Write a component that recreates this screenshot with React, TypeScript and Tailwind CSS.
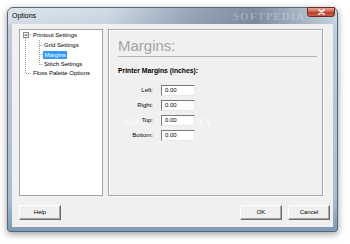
import React from "react";

const font = { fontFamily: '"Liberation Sans", Arial, sans-serif' };

function Btn({ label, className = "" }: { label: string; className?: string }) {
  return (
    <div
      className={
        "w-[42px] h-[15px] flex items-center justify-center text-[6px] text-black bg-[#f0f0f0] border border-t-white border-l-white border-r-[#6b6b6b] border-b-[#6b6b6b] shadow-[inset_-1px_-1px_0_#a8a8a8] " +
        className
      }
    >
      {label}
    </div>
  );
}

function Row({ label }: { label: string }) {
  return (
    <div className="flex items-center h-[11px]">
      <div className="w-[35px] text-right text-[6px] leading-[11px] text-black">{label}</div>
      <div className="ml-[8px] w-[34px] h-[11px] bg-white border-t border-l border-t-[#7a7a7a] border-l-[#7a7a7a] border-b border-r border-b-[#e8e8e8] border-r-[#e8e8e8] flex items-center pl-[3px] text-[6px] text-black">
        0.00
      </div>
    </div>
  );
}

export default function App() {
  return (
    <div className="w-[350px] h-[244px] bg-white pt-[7px] pl-[7px]" style={font}>
      <div className="relative w-[331px] h-[225px] flex flex-col rounded-t-[6px] rounded-b-[3px] border border-[#54667a] bg-[linear-gradient(to_bottom,#d3dde7,#bccbda_12%,#a9bdd0_85%,#7f9ab5)] shadow-[0_2px_7px_rgba(0,0,0,0.4)]">
        {/* Title bar */}
        <div className="relative h-[16px] flex items-center pl-[4px] rounded-t-[5px] bg-[linear-gradient(to_right,rgba(255,255,255,0.25),transparent_30%,rgba(70,90,115,0.4)_55%,rgba(60,80,105,0.55)_75%,rgba(90,110,130,0.3)_90%,transparent)]">
          <span className="text-[7px] text-black">Options</span>
          <span className="absolute left-[225px] top-[1px] text-[11px] leading-[14px] font-bold tracking-[1px] text-white/25" style={{ fontFamily: '"Liberation Serif", serif' }}>
            SOFTPEDIA
          </span>
          <div className="absolute right-[2px] top-[-1px] w-[28px] h-[10px] rounded-b-[3px] border border-[#6b2a22] bg-[linear-gradient(to_bottom,#e5a595,#cf6552_45%,#b7412f_55%,#c9604a)] flex items-center justify-center">
            <svg width="7" height="6" viewBox="0 0 7 6">
              <path d="M1 0.8 L6 5.2 M6 0.8 L1 5.2" stroke="#fff" strokeWidth="1.6" strokeLinecap="round" />
            </svg>
          </div>
        </div>

        {/* Client area */}
        <div className="mx-[4px] h-[203px] bg-[#f0f0f0] pt-[5px] pl-[7px] pr-[3px] flex flex-col relative">
          <div className="flex gap-[5px] h-[167px]">
            {/* Tree */}
            <div className="relative w-[84px] h-[167px] bg-white border border-[#a5a5a5] pt-[1px] text-[6px] text-black">
              <svg className="absolute left-0 top-0" width="84" height="60">
                <g stroke="#a0a0a0" strokeWidth="1" strokeDasharray="1 1" fill="none">
                  <path d="M5.5 8 V43.5 H12" />
                  <path d="M8 4.5 H12" />
                  <path d="M19.5 10 V34.5" />
                  <path d="M19.5 15.5 H23" />
                  <path d="M19.5 24.5 H23" />
                  <path d="M19.5 34.5 H23" />
                </g>
                <rect x="3.5" y="2.5" width="5" height="5" fill="#fff" stroke="#8a8a8a" strokeWidth="1" />
                <path d="M4.5 5 H7.5" stroke="#333" strokeWidth="1" />
              </svg>
              <div className="h-[9.5px] flex items-center pl-[13px]">Printout Settings</div>
              <div className="h-[9.5px] flex items-center pl-[24px]">Grid Settings</div>
              <div className="h-[9.5px] flex items-center pl-[23px]">
                <span className="bg-[#3399ff] text-white px-[1.5px] leading-[8px]">Margins</span>
              </div>
              <div className="h-[9.5px] flex items-center pl-[24px]">Stitch Settings</div>
              <div className="h-[9.5px] flex items-center pl-[13px]">Floss Palette Options</div>
            </div>

            {/* Right panel */}
            <div className="relative w-[215px] h-[167px] border border-[#a8a8a8] shadow-[1px_1px_0_#fff,inset_1px_1px_0_#fff] flex flex-col pl-[9px] pr-[5px] pt-[8px]">
              <div className="text-[15px] leading-[15px] text-[#a3a3a3]">Margins:</div>
              <div className="mt-[3px] h-px bg-[#b4b4b4]" />
              <div className="mt-[10px] text-[6.8px] leading-[8px] font-bold text-black">Printer Margins (inches):</div>
              <div className="mt-[10px] flex flex-col gap-[4px]">
                <Row label="Left:" />
                <Row label="Right:" />
                <Row label="Top:" />
                <Row label="Bottom:" />
              </div>
              <span className="absolute left-[15px] top-[86px] text-[10px] leading-[11px] font-bold tracking-[1px] text-white/70 pointer-events-none" style={{ fontFamily: '"Liberation Serif", serif' }}>
                SO
              </span>
              <span className="absolute left-[90px] top-[87px] text-[10px] leading-[11px] font-bold tracking-[1px] text-white/70 pointer-events-none" style={{ fontFamily: '"Liberation Serif", serif' }}>
                IA
              </span>
            </div>
          </div>

          {/* Buttons */}
          <div className="mt-[9px] flex items-center">
            <Btn label="Help" />
            <div className="flex-1" />
            <Btn label="OK" />
            <Btn label="Cancel" className="ml-[6px]" />
          </div>
        </div>
      </div>
    </div>
  );
}
